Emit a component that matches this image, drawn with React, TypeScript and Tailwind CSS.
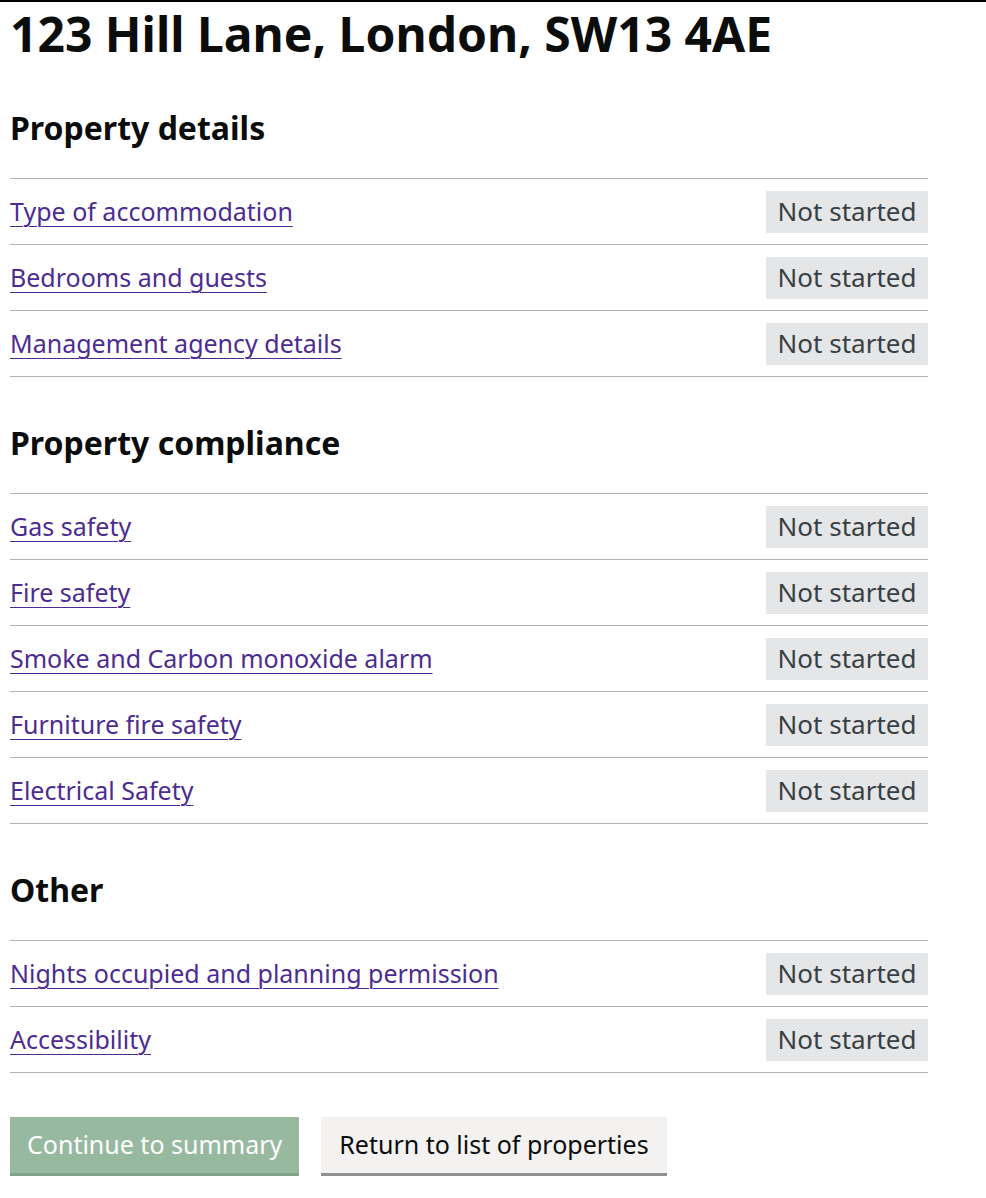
const sections = [
  {
    title: "Property details",
    items: ["Type of accommodation", "Bedrooms and guests", "Management agency details"],
  },
  {
    title: "Property compliance",
    items: [
      "Gas safety",
      "Fire safety",
      "Smoke and Carbon monoxide alarm",
      "Furniture fire safety",
      "Electrical Safety",
    ],
  },
  {
    title: "Other",
    items: ["Nights occupied and planning permission", "Accessibility"],
  },
];

function TaskRow({ label }: { label: string }) {
  return (
    <li className="flex h-[66px] items-center justify-between border-b border-[#b1b4b6]">
      <a
        href="#"
        className="text-[25px] leading-none text-[#4c2c92] underline decoration-1 underline-offset-[5px]"
      >
        {label}
      </a>
      <strong className="flex h-[42px] w-[162px] items-center justify-center bg-[#e5e6e7] text-[26px] font-normal text-[#383f43]">
        Not started
      </strong>
    </li>
  );
}

export default function App() {
  return (
    <div
      className="min-h-[1198px] border-t-2 border-black bg-white pl-[10px] text-[#0b0c0c]"
      style={{ fontFamily: '"Noto Sans", Arial, sans-serif' }}
    >
      <h1 className="pt-[6px] text-[48px] font-bold leading-[52px]">
        123 Hill Lane, London, SW13 4AE
      </h1>

      <div className="w-[918px]">
        {sections.map((section, i) => (
          <section key={section.title} className={i === 0 ? "mt-[50px]" : "mt-[48px]"}>
            <h2 className="mb-[32px] text-[32px] font-bold leading-[36px]">
              {section.title}
            </h2>
            <ul className="border-t border-[#b1b4b6]">
              {section.items.map((item) => (
                <TaskRow key={item} label={item} />
              ))}
            </ul>
          </section>
        ))}

        <div className="mt-[44px] flex gap-[22px]">
          <button
            disabled
            className="h-[56px] bg-[#96b9a0] px-[17px] text-[25px] text-white shadow-[0_3px_0_#7fa489]"
          >
            Continue to summary
          </button>
          <button className="h-[56px] bg-[#f3f2f1] px-[18px] text-[25px] text-[#0b0c0c] shadow-[0_3px_0_#929191]">
            Return to list of properties
          </button>
        </div>
      </div>
    </div>
  );
}
